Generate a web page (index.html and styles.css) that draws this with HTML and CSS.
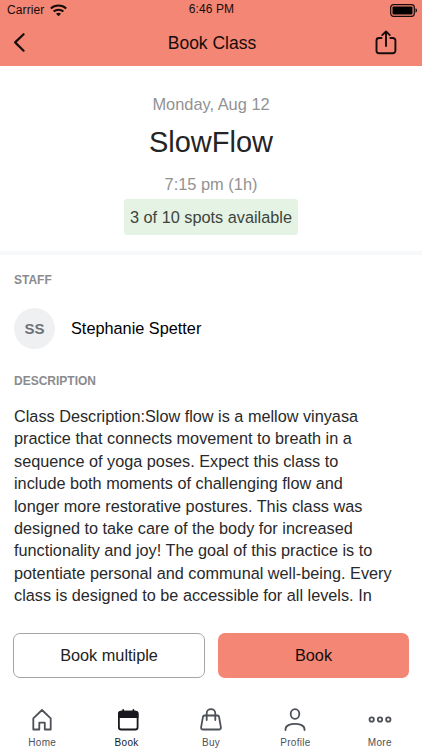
FILE: index.html
```html
<!DOCTYPE html>
<html lang="en">
<head>
  <meta charset="UTF-8">
  <meta name="viewport" content="width=device-width, initial-scale=1">
  <title>Book Class</title>
  <link rel="stylesheet" href="styles.css">
</head>
<body>
  <div class="app">
    <header class="header">
      <div class="status-bar">
        <div class="carrier">
          <span>Carrier</span>
          <svg width="17" height="13" viewBox="0 0 17 13" fill="none" stroke="#160c0a" stroke-width="2">
            <path d="M.8 4.5C5 .5 12 .5 16.2 4.5"/>
            <path d="M3.6 7.500c2.700-2.500 7.100-2.500 9.800 0"/>
            <path d="M8.500 12.200 6 9.700c1.400-1.300 3.600-1.300 5 0z" fill="#160c0a" stroke="none"/>
          </svg>
        </div>
        <span class="clock">6:46 PM</span>
        <svg class="battery" width="28" height="13" viewBox="0 0 28 13">
          <rect x=".7" y=".7" width="23.6" height="11.6" rx="2.8" fill="none" stroke="#160c0a" stroke-width="1.2"/>
          <rect x="2.5" y="2.5" width="20" height="8" rx="1" fill="#000"/>
          <path d="M25.5 4.3c2 .6 2 3.8 0 4.4z" fill="#160c0a"/>
        </svg>
      </div>
      <div class="nav-bar">
        <svg width="24" height="28" viewBox="0 0 24 28" fill="none" stroke="#160c0a" stroke-width="2.2" stroke-linecap="round" stroke-linejoin="round">
          <path d="M11.6 5.2 3.1 13.4l8.500 8.300"/>
        </svg>
        <h1>Book Class</h1>
        <svg width="24" height="28" viewBox="0 0 24 28" fill="none" stroke="#160c0a" stroke-width="1.9" stroke-linecap="round" stroke-linejoin="round">
          <path d="M7.500 9H5A2.500 2.500 0 0 0 2.500 11.500v10.200A2.500 2.500 0 0 0 5 24.200h13.900a2.500 2.500 0 0 0 2.500-2.500V11.500A2.500 2.500 0 0 0 18.900 9h-2.500"/>
          <path d="M12 17V2.600M8.200 6.100 12 2.400l3.800 3.700"/>
        </svg>
      </div>
    </header>

    <main class="content">
      <section class="summary">
        <p class="date">Monday, Aug 12</p>
        <h2>SlowFlow</h2>
        <p class="time">7:15 pm (1h)</p>
        <span class="spots">3 of 10 spots available</span>
      </section>

      <section class="details">
        <h3>STAFF</h3>
        <div class="staff">
          <div class="avatar">SS</div>
          <span class="staff-name">Stephanie Spetter</span>
        </div>
        <h3>DESCRIPTION</h3>
        <p class="description">
          Class Description:Slow flow is a mellow vinyasa<br>
          practice that connects movement to breath in a<br>
          sequence of yoga poses. Expect this class to<br>
          include both moments of challenging flow and<br>
          longer more restorative postures. This class was<br>
          designed to take care of the body for increased<br>
          functionality and joy! The goal of this practice is to<br>
          potentiate personal and communal well-being. Every<br>
          class is designed to be accessible for all levels. In
        </p>
      </section>
    </main>

    <div class="actions">
      <button class="button outline">Book multiple</button>
      <button class="button primary">Book</button>
    </div>

    <nav class="tabs">
      <a class="tab">
        <svg class="icon" viewBox="0 0 24 24">
          <path d="M3.300 10.300 12 2l8.700 8.300v11.200h-5.900v-6.800H9.300v6.800h-6z"/>
        </svg>
        <span>Home</span>
      </a>
      <a class="tab active">
        <svg class="icon" viewBox="0 0 24 24">
          <rect x="3.900" y="3.700" width="18.700" height="17.800" rx="2.300"/>
          <path d="M3.900 9.200V6a2.300 2.300 0 0 1 2.300-2.300h14.100A2.300 2.300 0 0 1 22.600 6v3.200z" fill="#18191e"/>
          <path d="M8.200 2v2M18.400 2v2"/>
        </svg>
        <span>Book</span>
      </a>
      <a class="tab">
        <svg class="icon" viewBox="0 0 24 24">
          <path d="M5.500 7.500h13a1.500 1.500 0 0 1 1.500 1.200l1.900 10.700a1.800 1.800 0 0 1-1.800 2.100H3.900a1.800 1.800 0 0 1-1.800-2.100L4 8.700a1.500 1.500 0 0 1 1.500-1.200z"/>
          <path d="M7.700 12V5.200c0-5.400 8.600-5.400 8.600 0V12"/>
        </svg>
        <span>Buy</span>
      </a>
      <a class="tab">
        <svg class="icon" viewBox="0 0 24 24">
          <ellipse cx="12" cy="6" rx="4.300" ry="4.900"/>
          <path d="M2.500 22v-.8c0-7.200 19-7.200 19 0v.8"/>
        </svg>
        <span>Profile</span>
      </a>
      <a class="tab">
        <svg class="icon" viewBox="0 0 24 24">
          <circle cx="3.700" cy="11.500" r="2.200"/>
          <circle cx="12" cy="11.500" r="2.200"/>
          <circle cx="20.300" cy="11.500" r="2.200"/>
        </svg>
        <span>More</span>
      </a>
    </nav>
  </div>
</body>
</html>
```

FILE: styles.css
```css
* {
  box-sizing: border-box;
}

body {
  margin: 0;
  font-family: "Liberation Sans", Arial, sans-serif;
  background-color: #fff;
  color: #29292b;
}

h1, h2, h3, p {
  margin: 0;
  font-weight: normal;
}

.app {
  display: flex;
  flex-direction: column;
  height: 750px;
  overflow: hidden;
}

/* Header */
.header {
  flex: none;
  height: 66px;
  background-color: #f48675;
  color: #160c0a;
}

.status-bar {
  display: grid;
  grid-template-columns: 1fr auto 1fr;
  align-items: center;
  height: 20px;
  padding: 0 4px 0 7px;
  font-size: 12px;
  letter-spacing: 0.1px;
}

.carrier {
  display: flex;
  align-items: center;
  gap: 6px;
}

.clock {
  position: relative;
  top: -1px;
  left: -1px;
}

.battery {
  justify-self: end;
}

.nav-bar {
  display: flex;
  align-items: center;
  justify-content: space-between;
  height: 46px;
  padding: 0 24px 0 12px;
}

.nav-bar h1 {
  font-size: 17.5px;
  padding-left: 14px;
}

/* Class summary */
.content {
  flex: 1;
  min-height: 0;
  overflow: hidden;
}

.summary {
  display: flex;
  flex-direction: column;
  align-items: center;
  height: 189px;
  padding-top: 28px;
  border-bottom: 4px solid #f7f8fa;
}

.date, .time {
  font-size: 16.4px;
  line-height: 20px;
  color: #929292;
}

.summary h2 {
  margin: 10px 0 10px;
  font-size: 29px;
  line-height: 36px;
  color: #242426;
}

.time {
  margin-top: 4px;
}

.spots {
  margin-top: 5px;
  padding: 0 5.5px;
  border-radius: 3px;
  background-color: #e4f3e4;
  font-size: 16.3px;
  line-height: 36px;
  color: #3d443d;
}

/* Details */
.details {
  padding: 18px 14px 0;
}

.details h3 {
  font-size: 12px;
  font-weight: bold;
  line-height: 14px;
  color: #8b8b8d;
}

.staff {
  display: flex;
  align-items: center;
  gap: 16px;
  margin: 21px 0 25px;
}

.avatar {
  width: 41px;
  height: 41px;
  border-radius: 50%;
  background-color: #eff0f2;
  color: #6e7277;
  font-size: 15px;
  font-weight: bold;
  line-height: 41px;
  text-align: center;
}

.staff-name {
  font-size: 16.3px;
  color: #000;
}

.description {
  margin-top: 17px;
  font-size: 16.25px;
  line-height: 22.4px;
  white-space: nowrap;
}

/* Bottom buttons */
.actions {
  display: flex;
  gap: 13px;
  padding: 0 13px;
}

.button {
  flex: 1;
  height: 45px;
  border: none;
  border-radius: 7px;
  font-family: inherit;
  font-size: 16.3px;
}

.outline {
  flex: none;
  width: 192px;
  border: 1px solid #a5a5a5;
  background-color: #fff;
  color: #222;
}

.primary {
  background-color: #f48675;
  color: #160c0a;
}

/* Tab bar */
.tabs {
  display: flex;
  height: 72px;
  padding-top: 30px;
}

.tab {
  flex: 1;
  display: flex;
  flex-direction: column;
  align-items: center;
  gap: 4px;
  font-size: 10px;
  line-height: 13px;
  letter-spacing: 0.3px;
  color: #4d5057;
}

.icon {
  width: 24px;
  height: 24px;
  fill: none;
  stroke: #4d5057;
  stroke-width: 1.8;
  stroke-linejoin: round;
  stroke-linecap: round;
  overflow: visible;
}

.active {
  color: #18191e;
}

.active .icon {
  stroke: #18191e;
}
```
